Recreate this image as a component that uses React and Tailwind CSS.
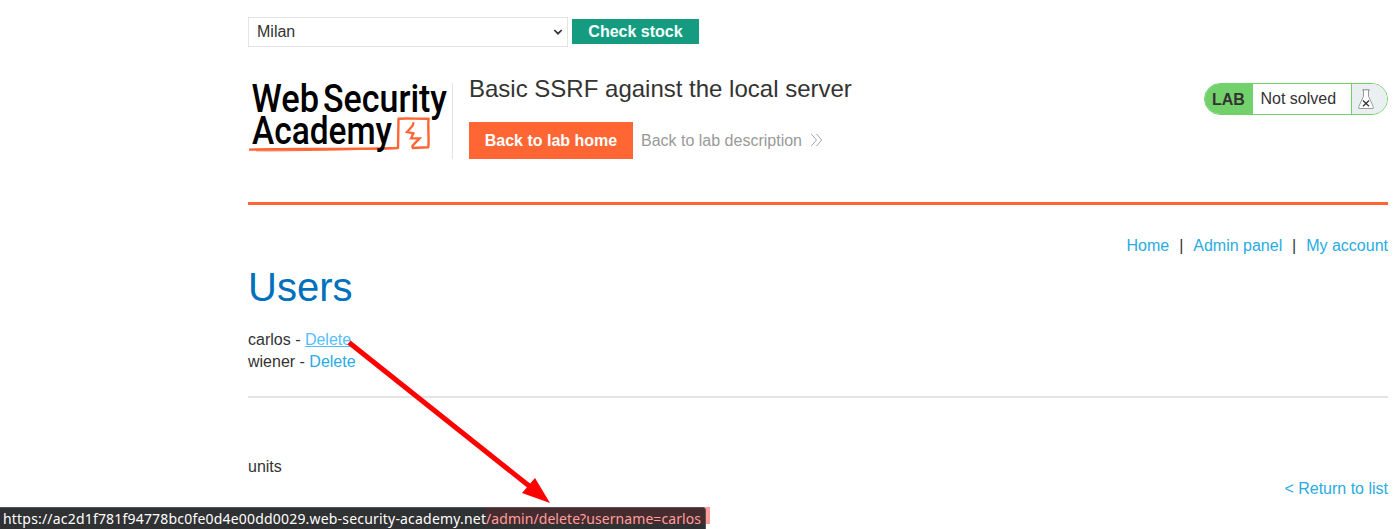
function Logo() {
  return (
    <svg width="204" height="76" viewBox="248 83 204 76" className="block overflow-visible" aria-label="Web Security Academy">
      <path d="M249 149.6 C280 148.6 345 149.6 398 148 L398.5 118.8 C409 117.8 420 119.3 428.6 118.6 C427.6 128 429.3 139 428.3 147.3 L412 148" fill="none" stroke="#ff6633" strokeWidth="2.4" strokeLinejoin="round" />
      <path d="M256 150.8 C290 151.2 350 149.6 397 148.6" fill="none" stroke="#ff6633" strokeWidth="1" />
      <path d="M413.6 122.3 L412.8 125.5 L407 132 L413.4 133.4 L411 138.4 L419.6 138.4 L412.6 145.6 L412.4 148.2" fill="none" stroke="#ff6633" strokeWidth="2.3" />
      <g fontFamily="Roboto, sans-serif" fontWeight="500" fontSize="38" fill="#000">
        <text x="251.5" y="111.5" textLength="67.5" lengthAdjust="spacingAndGlyphs">Web</text>
        <text x="323" y="111.5" textLength="124" lengthAdjust="spacingAndGlyphs">Security</text>
        <text x="252" y="144.3" textLength="140" lengthAdjust="spacingAndGlyphs">Academy</text>
      </g>
    </svg>
  );
}

function Flask() {
  return (
    <svg width="16" height="21" viewBox="0 0 16 21" fill="none" className="block shrink-0">
      <path d="M5.5 1 V7.3 L0.8 17.5 V19.5 H15.2 V17.5 L10.5 7.3 V1" fill="#fff" stroke="#999" />
      <path d="M4.3 0.8 H11.7" stroke="#888" />
      <path d="M5 11.5 L11 17.3 M11 11.5 L5 17.3" stroke="#333" strokeWidth="1.3" />
    </svg>
  );
}

export default function App() {
  return (
    <div className="relative h-[529px] overflow-hidden bg-white pt-[17px] font-['Liberation_Sans',Arial,sans-serif] text-base leading-[22px] text-[#333332]">
      <main className="ml-[248px] w-[1140px]">
        <form className="flex h-[30px] items-start gap-1">
          <div className="flex h-[30px] w-80 items-center justify-between border border-[#e4e4e4] pr-1 pl-2">
            <span>Milan</span>
            <svg width="10" height="8" viewBox="0 0 10 8" fill="none"><path d="M1.3 2 L5 5.7 L8.7 2" stroke="#333332" strokeWidth="1.7" /></svg>
          </div>
          <button type="button" className="mt-[2px] h-[25px] w-[127px] bg-[#159c80] text-center leading-[25px] font-bold text-[#f5fffc]">Check stock</button>
        </form>

        <header className="mt-9 flex h-[122px] items-start border-b-[3px] border-[#ff6633]">
          <div className="h-[76px] w-[205px] border-r border-[#e4e4e4]"><Logo /></div>
          <div className="ml-4">
            <h2 className="-mt-[9px] text-2xl leading-[30px]">Basic SSRF against the local server</h2>
            <div className="mt-[18px] flex items-center">
              <a className="h-[37px] w-[164px] bg-[#ff6633] text-center leading-[37px] font-bold text-white">Back to lab home</a>
              <a className="ml-2 flex items-center gap-2 text-[#999]">
                Back to lab description
                <svg width="13" height="14" viewBox="0 0 13 14" fill="none" stroke="#999" strokeWidth="0.9" className="-mt-px"><path d="M1.3 1 L6.5 7 L1.3 13 M6.5 1 L11.7 7 L6.5 13" /></svg>
              </a>
            </div>
          </div>
          <div className="ml-auto flex h-8 w-[184px] overflow-hidden rounded-[16px] border border-[#73d16c]">
            <span className="w-12 bg-[#73d16c] pl-[7px] leading-[31px] font-bold">LAB</span>
            <span className="w-[98px] pl-[7.5px] leading-[30px]">Not solved</span>
            <span className="flex flex-1 border-l border-[#73d16c] bg-[#eaeff1] pt-[5px] pl-[6px]"><Flask /></span>
          </div>
        </header>

        <nav className="mt-[30px] flex justify-end whitespace-pre text-[#29abe2]">
          <a>Home</a><span className="w-6 text-center text-[#333332]">|</span>
          <a>Admin panel</a><span className="w-6 text-center text-[#333332]">|</span>
          <a>My account</a>
        </nav>
        <h1 className="mt-[6px] text-[40px] leading-[48px] text-[#0071bc]">Users</h1>
        <div className="mt-[18px]">
          <div>carlos - <a className="text-[#54c0ff] underline">Delete</a></div>
          <div>wiener - <a className="text-[#29abe2]">Delete</a></div>
        </div>
        <hr className="mt-[23px] border-t-2 border-[#e4e4e4]" />
        <div className="mt-[58px]">units</div>
        <div className="text-right text-[#29abe2]">&lt; Return to list</div>
      </main>

      <svg className="absolute top-[330px] left-[340px]" width="220" height="180" viewBox="340 330 220 180">
        <path d="M349 342.5 L533 489" stroke="#f00" strokeWidth="5" />
        <path d="M550 503 L522 493 L535 478 Z" fill="#f00" />
      </svg>
      <div className="absolute bottom-0 left-0 h-[22px] w-[706px] overflow-hidden rounded-tr-[3px] border-t border-r border-[#55585a] bg-[#303133] pl-[3px] font-['Noto_Sans',sans-serif] text-[14px] leading-[22px] whitespace-nowrap text-white">
        <span className="inline-block w-[483px] tracking-[0.19px]">https://ac2d1f781f94778bc0fe0d4e00dd0029.web-security-academy.net</span>
        <span className="tracking-[0.07px] text-[#ffb0b0]">/admin/delete?username=carlos</span>
      </div>
      <div className="absolute top-[507px] left-[486px] h-[17px] w-[220px] bg-[#ff0000]/10" />
      <div className="absolute top-[507px] left-[706px] h-[17px] w-[4px] bg-[#ff9c9c]" />
    </div>
  );
}
